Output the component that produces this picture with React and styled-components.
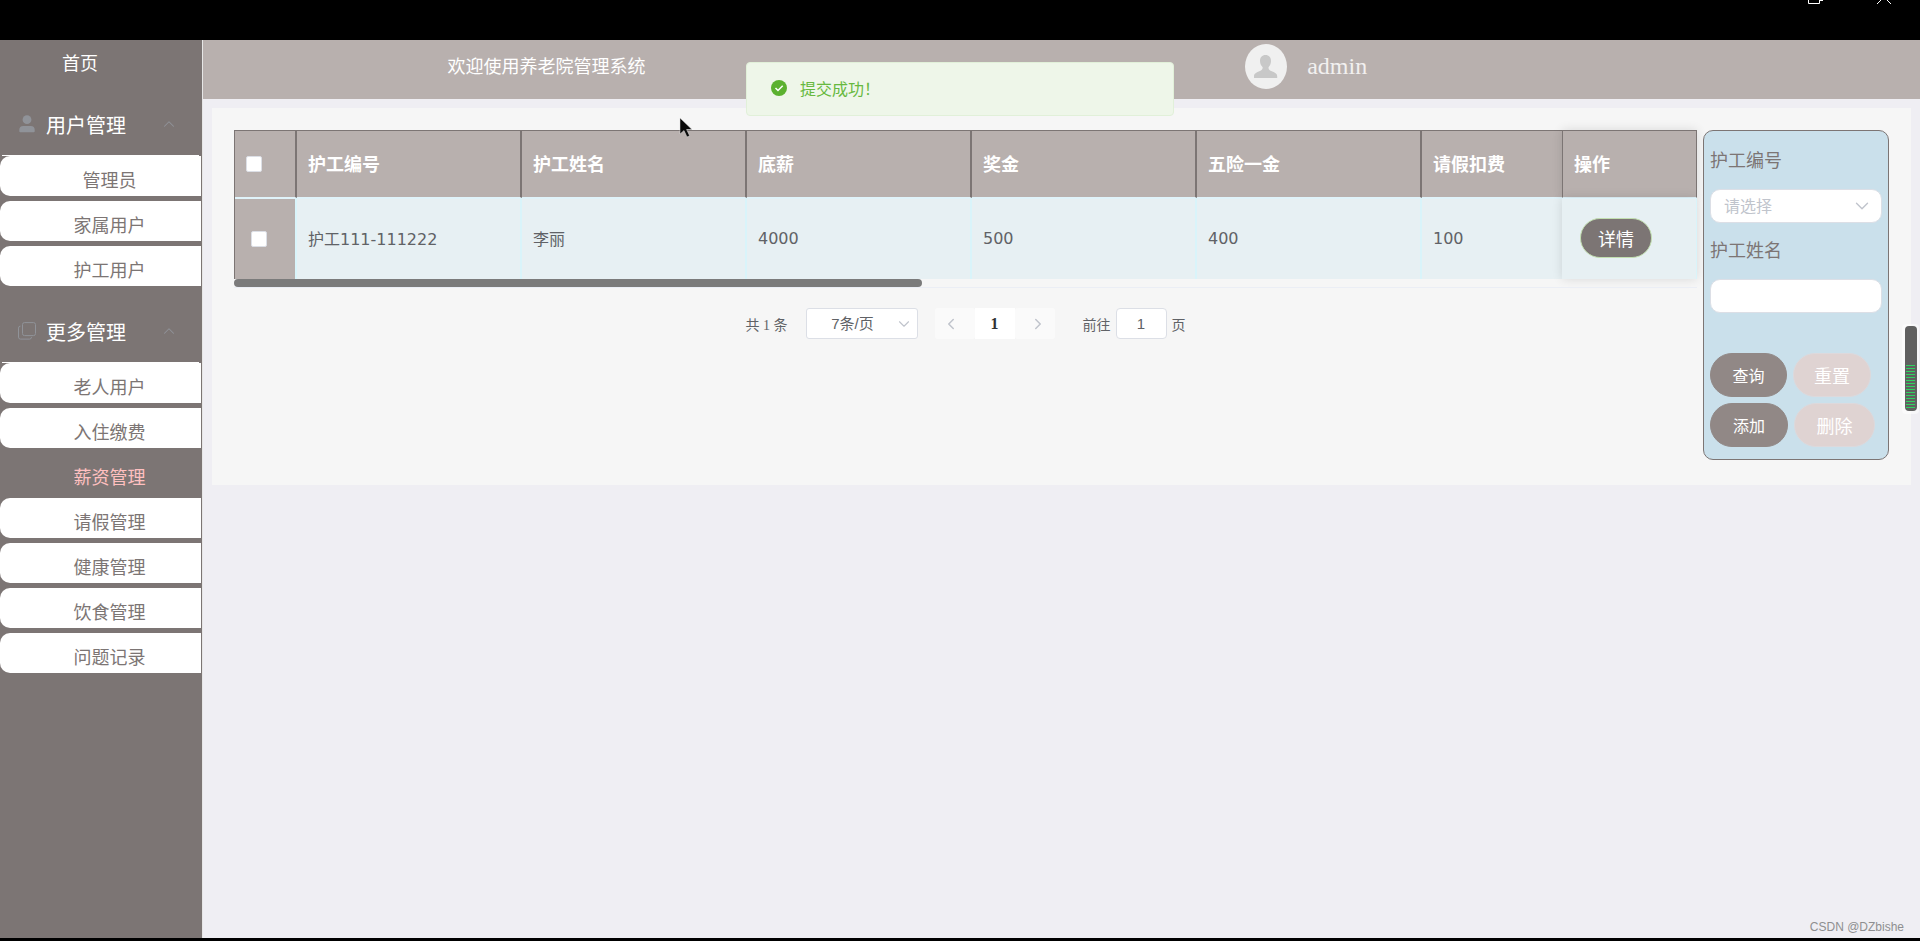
import React, { useState } from 'react';
import { styled, createGlobalStyle } from 'styled-components';
import { ChevronDown, ChevronLeft, ChevronRight, ChevronUp } from 'lucide-react';

const sans = `'Liberation Sans', 'Noto Sans CJK SC', sans-serif`;
const serif = `'Liberation Serif', 'Noto Sans CJK SC', serif`;
const wide = `'DejaVu Sans', 'Noto Sans CJK SC', sans-serif`;

const GlobalStyle = createGlobalStyle`
  * {
    box-sizing: border-box;
  }
  body {
    margin: 0;
    background-color: #efeef3;
    font-family: ${sans};
  }
  button, input, select {
    margin: 0;
    font-family: inherit;
  }
`;

const Page = styled.div`
  display: flex;
  flex-direction: column;
  min-height: 100vh;
  border-bottom: 3px solid #000;
`;
const TitleBar = styled.div`
  display: flex;
  justify-content: flex-end;
  gap: 50px;
  height: 40px;
  padding-right: 27px;
  background-color: #000;
`;
const Body = styled.div`
  display: flex;
  flex: 1;
`;

/* sidebar */
const Sidebar = styled.nav`
  flex: 0 0 203px;
  padding-right: 1px;
  border-right: 1px solid #e6e6e6;
  background-color: #7c7574;
`;
const HomeLink = styled.a`
  display: block;
  height: 44px;
  padding-left: 62px;
  color: #fff;
  font-size: 18px;
  line-height: 48px;
  text-decoration: none;
`;
const Group = styled.section`
  margin-top: 11px;
`;
const GroupTitle = styled.button`
  display: flex;
  align-items: center;
  width: 100%;
  height: 60px;
  padding: 0 23px 2px 18px;
  border: 0;
  background: none;
  color: #fff;
  font-size: 20px;
  svg {
    color: #909399;
  }
  span {
    flex: 1;
    margin-left: 10px;
    text-align: left;
  }
`;
const MenuList = styled.ul`
  display: flow-root;
  margin: 0;
  padding: 0;
  list-style: none;
  &::before {
    content: '';
    display: block;
    height: 1px;
    margin: 0 2px;
    background-color: #fff;
  }
`;
const MenuItem = styled.li`
  height: 40px;
  margin-bottom: 5px;
  border-radius: 10px 0 0 10px;
  background-color: ${({ $active }) => ($active ? 'transparent' : '#fff')};
  a {
    display: block;
    padding-left: 18px;
    color: ${({ $active }) => ($active ? '#ffc0c0' : '#7c7574')};
    font-size: 18px;
    line-height: 50px;
    text-align: center;
    text-decoration: none;
  }
`;

/* header */
const Main = styled.div`
  flex: 1;
  min-width: 0;
`;
const Header = styled.header`
  display: grid;
  grid-template-columns: 2fr 1fr 2fr;
  align-items: center;
  height: 59px;
  padding-bottom: 6px;
  background-color: #b8b0ae;
`;
const Welcome = styled.div`
  color: #fff;
  font-size: 18px;
  line-height: 24px;
  text-align: center;
`;
const User = styled.div`
  display: flex;
  grid-column: 3;
  align-items: center;
  gap: 20px;
  padding-left: 12px;
  color: #f2f0f0;
  font-family: ${serif};
  font-size: 24px;
`;

/* content */
const Card = styled.main`
  display: flex;
  align-items: flex-start;
  gap: 6px;
  margin: 9px 9px 0;
  padding: 22px 22px 25px;
  background-color: #f6f6f6;
`;
const TableArea = styled.div`
  flex: 1;
  min-width: 0;
`;
const Table = styled.table`
  width: 100%;
  table-layout: fixed;
  border-collapse: separate;
  border-spacing: 0;
  border-left: 1px solid #7c7574;
  th, td {
    padding: 0 11px 2px;
    text-align: left;
  }
  th {
    height: 68px;
    border-top: 1px solid #7c7574;
    border-right: 2px solid #7c7574;
    border-bottom: 1px solid #e0f3fa;
    background-color: #b8b0ae;
    color: #fff;
    font-size: 18px;
  }
  td {
    height: 81px;
    border-top: 1px solid #e0f3fa;
    border-right: 2px solid #d9f4fa;
    background-color: #e7f0f3;
    color: #606266;
    font-family: ${wide};
    font-size: 16px;
  }
  th:first-child, td:first-child {
    padding-bottom: 0;
  }
  td:first-child {
    padding-left: 16px;
    background-color: #b8b0ae;
  }
  th:nth-last-child(2), td:nth-last-child(2) {
    border-right: 0;
  }
  th:last-child {
    border-left: 1px solid #7c7574;
    border-right-width: 1px;
  }
  td:last-child {
    padding-left: 18px;
    border-right-width: 1px;
  }
  th:last-child, td:last-child {
    box-shadow: 0 0 10px rgba(0, 0, 0, 0.12);
  }
`;
const Col = styled.col`
  width: ${({ $width }) => ($width ? `${$width}px` : 'auto')};
`;
const Check = styled.input`
  display: block;
  width: 16px;
  height: 16px;
  border: 1px solid #dcdfe6;
  border-radius: 2px;
  background-color: #fff;
  appearance: none;
  &:checked {
    background-color: #67c23a;
  }
`;
const DetailButton = styled.button`
  height: 40px;
  padding: 0 17px;
  border: 1px solid #c2dfb0;
  border-radius: 20px;
  background-color: #7c7574;
  color: #fff;
  font-family: ${sans};
  font-size: 18px;
`;
const ScrollTrack = styled.div`
  height: 9px;
  border-bottom: 1px solid #ebeef5;
`;
const ScrollThumb = styled.div`
  width: 47%;
  height: 8px;
  border-radius: 4px;
  background-color: #7b7b7b;
`;

const Pagination = styled.div`
  display: flex;
  align-items: center;
  justify-content: center;
  margin-top: 20px;
  color: #606266;
  font-family: ${serif};
  font-size: 14px;
`;
const SelectBox = styled.div`
  display: grid;
  align-items: center;
  select, svg {
    grid-area: 1 / 1;
  }
  svg {
    justify-self: end;
    margin-right: ${({ $small }) => ($small ? '5px' : '9px')};
    color: #c0c4cc;
    pointer-events: none;
  }
`;
const PageSize = styled.select`
  width: 112px;
  height: 31px;
  padding: 0 18px 0 0;
  border: 1px solid #dcdfe6;
  border-radius: 3px;
  background-color: #fff;
  color: #606266;
  font-family: ${sans};
  font-size: 15px;
  text-align: center;
  text-align-last: center;
  appearance: none;
`;
const Pager = styled.div`
  display: flex;
  margin: 0 28px 0 17px;
`;
const PagerButton = styled.button`
  display: flex;
  align-items: center;
  justify-content: center;
  width: 40px;
  height: 31px;
  padding: 0;
  border: 0;
  border-radius: ${({ $current }) => ($current ? '0' : '3px')};
  background-color: ${({ $current }) => ($current ? '#fff' : '#fafafa')};
  color: ${({ $current }) => ($current ? '#303133' : '#c0c4cc')};
  font-size: 16px;
  font-weight: 700;
  &:first-child {
    padding-right: 8px;
  }
  &:last-child {
    padding-left: 6px;
  }
`;
const Jump = styled.label`
  display: flex;
  align-items: center;
  gap: 5px;
`;
const JumpInput = styled.input`
  width: 51px;
  height: 31px;
  padding: 0;
  border: 1px solid #dcdfe6;
  border-radius: 4px;
  background-color: #fff;
  color: #606266;
  font-family: ${sans};
  font-size: 15px;
  text-align: center;
`;
const Total = styled.span`
  margin-right: 18px;
`;

/* search panel */
const SearchPanel = styled.form`
  display: flex;
  flex: 0 0 186px;
  flex-direction: column;
  padding: 2px 6px 12px;
  border: 1px solid #7c7574;
  border-radius: 10px;
  background-color: #cae0eb;
`;
const Label = styled.label`
  color: #7c7574;
  font-size: 18px;
  line-height: 56px;
`;
const Field = styled.input`
  width: 100%;
  height: 34px;
  padding: 0 15px;
  border: 1px solid #dcdfe6;
  border-radius: 10px;
  background-color: #fff;
  color: #606266;
  font-size: 16px;
`;
const SelectField = styled(Field)`
  padding: 0 13px;
  color: #c0c4cc;
  appearance: none;
`;
const Actions = styled.div`
  display: flex;
  flex-wrap: wrap;
  gap: 6px;
  margin-top: 40px;
`;
const ActionButton = styled.button`
  width: ${({ $width }) => $width}px;
  height: 44px;
  padding: 0;
  border: 1px solid ${({ $muted }) => ($muted ? '#ddd9dc' : '#918886')};
  border-radius: 22px;
  background-color: ${({ $muted }) => ($muted ? '#dfd3d2' : '#918886')};
  color: #fff;
  font-size: ${({ $muted }) => ($muted ? '18px' : '16px')};
`;

/* things floating over the page */
const Toast = styled.div`
  position: absolute;
  top: 62px;
  left: 50%;
  display: flex;
  align-items: center;
  gap: 13px;
  width: 428px;
  height: 54px;
  padding: 0 0 2px 24px;
  border: 1px solid #e1f0d9;
  border-radius: 4px;
  background-color: #eef6e9;
  color: #67b93f;
  font-size: 16px;
  transform: translateX(-50%);
`;
const Cursor = styled.svg`
  position: absolute;
  top: 117px;
  left: 679px;
`;
const Meter = styled.svg`
  position: absolute;
  top: 322px;
  right: 0;
`;
const Watermark = styled.div`
  position: absolute;
  right: 16px;
  bottom: 7px;
  color: #8e8e90;
  font-size: 12px;
  line-height: 14px;
`;

const groups = [
  {
    title: '用户管理',
    icon: 'user',
    items: ['管理员', '家属用户', '护工用户'],
  },
  {
    title: '更多管理',
    icon: 'copy',
    items: ['老人用户', '入住缴费', '薪资管理', '请假管理', '健康管理', '饮食管理', '问题记录'],
  },
];
const columns = ['护工编号', '护工姓名', '底薪', '奖金', '五险一金', '请假扣费'];
const rows = [['护工111-111222', '李丽', '4000', '500', '400', '100']];
const bars = Array.from({ length: 15 }, (_, i) => 43 + i * 3);

const GroupIcon = ({ name }) =>
  name === 'user' ? (
    <svg width="18" height="18" viewBox="0 0 18 18" fill="currentColor">
      <circle cx="9" cy="4.7" r="4.4" />
      <path d="M1.3 16.2v-1.2a4 4 0 0 1 4-4h7.4a4 4 0 0 1 4 4v1.2a1 1 0 0 1-1 1H2.3a1 1 0 0 1-1-1z" />
    </svg>
  ) : (
    <svg width="18" height="18" viewBox="0 0 18 18" fill="none" stroke="currentColor">
      <rect x="4.5" y="0.6" width="13" height="13" rx="2" />
      <path d="M2.5 4.1a2 2 0 0 0-2 2v9a2 2 0 0 0 2 2h9a2 2 0 0 0 2-2" />
    </svg>
  );

const App = () => {
  const [active, setActive] = useState('薪资管理');

  return (
    <Page>
      <GlobalStyle />
      <TitleBar>
        <svg width="20" height="6" fill="none" stroke="#fff">
          <path d="M3.5 0v3.5h11V0M14 0.5h4" />
        </svg>
        <svg width="18" height="6" fill="none" stroke="#fff">
          <path d="M2 4l4.5-4.5M16 4l-4.5-4.5" />
        </svg>
      </TitleBar>
      <Body>
        <Sidebar>
          <HomeLink href="#home">首页</HomeLink>
          {groups.map(({ title, icon, items }) => (
            <Group key={title}>
              <GroupTitle type="button">
                <GroupIcon name={icon} />
                <span>{title}</span>
                <ChevronUp size={18} strokeWidth={1.4} />
              </GroupTitle>
              <MenuList>
                {items.map((item) => (
                  <MenuItem key={item} $active={item === active}>
                    <a href={`#${item}`} onClick={() => setActive(item)}>
                      {item}
                    </a>
                  </MenuItem>
                ))}
              </MenuList>
            </Group>
          ))}
        </Sidebar>
        <Main>
          <Header>
            <Welcome>欢迎使用养老院管理系统</Welcome>
            <User>
              <svg width="42" height="45" viewBox="0 0 42 45">
                <ellipse cx="21" cy="22.5" rx="21" ry="22.5" fill="#f0f0f0" />
                <path
                  d="M20.5 11c3.6 0 5.6 2.7 5.5 6.2-.1 2.5-1.1 4.7-2.5 6 0 1.6.4 2.7 2 3.5 3.5 1.6 6.7 2.4 6.7 5.300V34H9v-2c0-2.900 3.200-3.700 6.500-5.300 1.600-.8 2.200-1.900 2.200-3.500-1.500-1.300-2.600-3.500-2.700-6-.1-3.500 1.900-6.200 5.500-6.200z"
                  fill="#c8c8c8"
                />
              </svg>
              admin
            </User>
          </Header>
          <Card>
            <TableArea>
              <Table>
                <colgroup>
                  <Col $width={62} />
                  {columns.map((name, i) => (
                    <Col key={name} $width={i < columns.length - 1 ? 225 : 0} />
                  ))}
                  <Col $width={135} />
                </colgroup>
                <thead>
                  <tr>
                    <th>
                      <Check type="checkbox" aria-label="全选" />
                    </th>
                    {columns.map((name) => (
                      <th key={name}>{name}</th>
                    ))}
                    <th>操作</th>
                  </tr>
                </thead>
                <tbody>
                  {rows.map((row) => (
                    <tr key={row[0]}>
                      <td>
                        <Check type="checkbox" aria-label={row[0]} />
                      </td>
                      {row.map((value) => (
                        <td key={value}>{value}</td>
                      ))}
                      <td>
                        <DetailButton type="button">详情</DetailButton>
                      </td>
                    </tr>
                  ))}
                </tbody>
              </Table>
              <ScrollTrack>
                <ScrollThumb />
              </ScrollTrack>
              <Pagination>
                <Total>共 1 条</Total>
                <SelectBox $small>
                  <PageSize aria-label="每页条数">
                    <option>7条/页</option>
                  </PageSize>
                  <ChevronDown size={18} strokeWidth={1.5} />
                </SelectBox>
                <Pager>
                  <PagerButton type="button" aria-label="上一页">
                    <ChevronLeft size={18} />
                  </PagerButton>
                  <PagerButton type="button" $current>
                    1
                  </PagerButton>
                  <PagerButton type="button" aria-label="下一页">
                    <ChevronRight size={18} />
                  </PagerButton>
                </Pager>
                <Jump>
                  前往
                  <JumpInput defaultValue="1" />
                  页
                </Jump>
              </Pagination>
            </TableArea>
            <SearchPanel>
              <Label htmlFor="worker-id">护工编号</Label>
              <SelectBox>
                <SelectField as="select" id="worker-id">
                  <option>请选择</option>
                </SelectField>
                <ChevronDown size={22} strokeWidth={1.5} />
              </SelectBox>
              <Label htmlFor="worker-name">护工姓名</Label>
              <Field id="worker-name" />
              <Actions>
                <ActionButton type="button" $width={77}>
                  查询
                </ActionButton>
                <ActionButton type="button" $muted $width={78}>
                  重置
                </ActionButton>
                <ActionButton type="button" $width={78}>
                  添加
                </ActionButton>
                <ActionButton type="button" $muted $width={81}>
                  删除
                </ActionButton>
              </Actions>
            </SearchPanel>
          </Card>
        </Main>
      </Body>
      <Toast role="status">
        <svg width="16" height="16" viewBox="0 0 16 16">
          <circle cx="8" cy="8" r="8" fill="#5bb12f" />
          <path d="M4.5 8l2.5 2.5 4.7-4.7" fill="none" stroke="#fff" strokeWidth="1.5" />
        </svg>
        提交成功！
      </Toast>
      <Cursor width="14" height="22" viewBox="0 0 14 22">
        <path d="M1 1v16l4-3.5 3 6.5 2.6-1.2-3-6.3H13z" fill="#0a0a0a" stroke="#ddd" strokeWidth="0.5" />
      </Cursor>
      <Meter width="20" height="96" viewBox="0 0 20 96">
        <rect x="2" y="2" width="17" height="90" rx="4" fill="#fff" opacity="0.5" />
        <rect x="5" y="4" width="12" height="85" rx="4" fill="#606060" />
        {bars.map((y) => (
          <rect key={y} x="6" y={y} width="9" height="1" fill="#2fd160" />
        ))}
      </Meter>
      <Watermark>CSDN @DZbishe</Watermark>
    </Page>
  );
};

export default App;
